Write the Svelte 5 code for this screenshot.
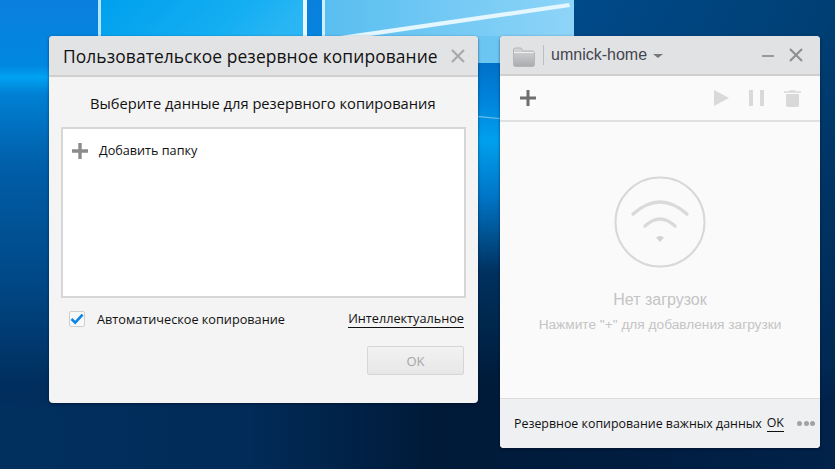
<script>
  const title = 'Пользовательское резервное копирование';
</script>

<div class="desktop">
  <svg class="wall" viewBox="0 0 835 469" width="835" height="469" aria-hidden="true">
    <defs>
      <linearGradient id="base" x1="0" y1="0" x2="0" y2="1">
        <stop offset="0" stop-color="#0a7fdc"/>
        <stop offset="0.14" stop-color="#0088e0"/>
        <stop offset="0.165" stop-color="#00a2f2"/>
        <stop offset="0.2" stop-color="#0080d4"/>
        <stop offset="0.36" stop-color="#015da7"/>
        <stop offset="0.62" stop-color="#004683"/>
        <stop offset="0.84" stop-color="#012c5a"/>
        <stop offset="1" stop-color="#01224a"/>
      </linearGradient>
      <linearGradient id="gap" x1="0" y1="0" x2="0" y2="1">
        <stop offset="0" stop-color="#0a7cd8"/>
        <stop offset="0.13" stop-color="#0070c8"/>
        <stop offset="0.2" stop-color="#0080d8"/>
        <stop offset="0.3" stop-color="#00a0ee"/>
        <stop offset="0.42" stop-color="#0075c6"/>
        <stop offset="0.58" stop-color="#00315f"/>
        <stop offset="0.8" stop-color="#001d3c"/>
        <stop offset="1" stop-color="#001a38"/>
      </linearGradient>
      <linearGradient id="navy" x1="0" y1="0" x2="1" y2="1">
        <stop offset="0" stop-color="#004a8a"/>
        <stop offset="0.5" stop-color="#003f74"/>
        <stop offset="1" stop-color="#012148"/>
      </linearGradient>
      <linearGradient id="paneL" x1="0" y1="0" x2="1" y2="0.2">
        <stop offset="0" stop-color="#00a0ee"/>
        <stop offset="0.7" stop-color="#14aef2"/>
        <stop offset="1" stop-color="#2ab6f4"/>
      </linearGradient>
      <linearGradient id="paneR" x1="0" y1="0" x2="1" y2="0">
        <stop offset="0" stop-color="#58bef0"/>
        <stop offset="1" stop-color="#8ed4f8"/>
      </linearGradient>
      <linearGradient id="bottom" x1="0" y1="0" x2="1" y2="0">
        <stop offset="0" stop-color="#01305f"/>
        <stop offset="0.3" stop-color="#012b58"/>
        <stop offset="0.52" stop-color="#001a38"/>
        <stop offset="0.7" stop-color="#001c3e"/>
        <stop offset="1" stop-color="#01224a"/>
      </linearGradient>
      <linearGradient id="fade" x1="0" y1="0" x2="0" y2="1">
        <stop offset="0" stop-color="#000"/>
        <stop offset="0.4" stop-color="#fff"/>
        <stop offset="1" stop-color="#fff"/>
      </linearGradient>
      <mask id="bottomMask" maskUnits="userSpaceOnUse" x="0" y="370" width="835" height="99">
        <rect x="0" y="370" width="835" height="99" fill="url(#fade)"/>
      </mask>
      <filter id="soft" x="-5%" y="-50%" width="110%" height="200%"><feGaussianBlur stdDeviation="0.7"/></filter>
    </defs>
    <rect width="835" height="469" fill="url(#base)"/>
    <rect x="440" y="0" width="140" height="469" fill="url(#gap)"/>
    <rect x="574" y="0" width="261" height="469" fill="url(#navy)"/>
    <rect x="0" y="370" width="835" height="99" fill="url(#bottom)" mask="url(#bottomMask)"/>
    <rect x="98" y="0" width="209" height="40" fill="url(#paneL)"/>
    <rect x="322" y="0" width="252" height="40" fill="url(#paneR)"/>
    <rect x="470" y="36" width="40" height="27" fill="#6cc6f2"/>
    <polygon points="340,36 569,3 570,7 370,36" fill="#e4f6fe" filter="url(#soft)"/>
    <rect x="98" y="0" width="3" height="40" fill="#b4e6fb"/>
    <rect x="303" y="0" width="4" height="40" fill="#e8f8fe"/>
    <rect x="322" y="0" width="3" height="40" fill="#cdeffd"/>
    <rect x="476" y="117" width="26" height="1.2" fill="#6fc0ea" transform="rotate(5 489 117)"/>
  </svg>

  <section class="win dialog">
    <header class="dlg-head">
      <h1>{title}</h1>
      <svg class="x" width="16" height="16" viewBox="0 0 16 16" aria-hidden="true"><path d="M2 2 14 14M14 2 2 14" stroke="#a7a9ab" stroke-width="2.2" fill="none"/></svg>
    </header>
    <div class="dlg-body">
      <h2>Выберите данные для резервного копирования</h2>
      <div class="list">
        <div class="add">
          <svg width="16" height="16" viewBox="0 0 16 16" aria-hidden="true"><path d="M8 0v16M0 8h16" stroke="#8c8c8c" stroke-width="3.4" fill="none"/></svg>
          <span class="add-label">Добавить папку</span>
        </div>
      </div>
      <div class="opts">
        <label class="auto">
          <span class="check">
            <svg width="14" height="12" viewBox="0 0 14 12" aria-hidden="true"><path d="M1.5 6 5.2 9.6 12.6 1.6" stroke="#0b84e8" stroke-width="2.6" fill="none"/></svg>
          </span>
          <span>Автоматическое копирование</span>
        </label>
        <span class="link">Интеллектуальное</span>
      </div>
      <div class="actions"><button disabled>OK</button></div>
    </div>
  </section>

  <section class="win main">
    <header class="main-head">
      <svg class="folder" width="22" height="20" viewBox="0 0 22 20" aria-hidden="true">
        <defs><linearGradient id="fold" x1="0" y1="0" x2="0" y2="1"><stop offset="0" stop-color="#d6d7d9"/><stop offset="1" stop-color="#a9abae"/></linearGradient></defs>
        <path d="M.5 3Q.5 1 2.500 1H8L10 4H19.500Q21.500 4 21.500 6V17.500Q21.500 19.500 19.500 19.500H2.500Q.5 19.500 .5 17.500Z" fill="url(#fold)" stroke="#b4b5b7"/>
        <path d="M1 5.500H21" stroke="#eeeeef"/>
      </svg>
      <i class="sep"></i>
      <span class="name">umnick-home</span>
      <i class="caret"></i>
      <span class="grow"></span>
      <i class="min"></i>
      <svg class="x2" width="14" height="14" viewBox="0 0 14 14" aria-hidden="true"><path d="M1 1 13 13M13 1 1 13" stroke="#8d8e90" stroke-width="2.1" fill="none"/></svg>
    </header>
    <div class="tools">
      <svg width="18" height="18" viewBox="0 0 18 18" aria-hidden="true"><path d="M9 1v16M1 9h16" stroke="#6e6e6e" stroke-width="3" fill="none"/></svg>
      <span class="grow"></span>
      <svg class="play" width="15" height="16" viewBox="0 0 15 16" aria-hidden="true"><path d="M0 0 15 8 0 16Z" fill="#d9d9d9"/></svg>
      <svg class="pause" width="15" height="16" viewBox="0 0 15 16" aria-hidden="true"><path d="M0 0h4v16H0zM11 0h4v16h-4z" fill="#d9d9d9"/></svg>
      <svg class="trash" width="17" height="17" viewBox="0 0 17 17" aria-hidden="true"><path d="M2 4h13v11Q15 17 13 17H4Q2 17 2 15Z" fill="#d9d9d9"/><path d="M0 2h17M5.500 1h6" stroke="#d9d9d9" stroke-width="1.500"/></svg>
    </div>
    <div class="empty">
      <svg class="wifi" width="92" height="92" viewBox="0 0 92 92" aria-hidden="true">
        <circle cx="46" cy="46" r="44.500" fill="none" stroke="#d8d8d8" stroke-width="2"/>
        <path d="M19 38Q46 14 73 38" fill="none" stroke="#dadada" stroke-width="3.400" stroke-linecap="round"/>
        <path d="M31 50Q46 36 61 50" fill="none" stroke="#dadada" stroke-width="3.400" stroke-linecap="round"/>
        <path d="M42 61.500Q46 58.500 50 61.500L46 66Z" fill="#d2d2d2"/>
      </svg>
      <p class="none">Нет загрузок</p>
      <p class="hint">Нажмите "+" для добавления загрузки</p>
    </div>
    <footer class="foot">
      <span class="msg">Резервное копирование важных данных</span>
      <span class="ok">OK</span>
      <span class="dots"><i></i><i></i><i></i></span>
    </footer>
  </section>
</div>

<style>
  :global(body) { margin: 0; background: #01224a; }
  .desktop {
    position: relative;
    width: 835px;
    height: 469px;
    overflow: hidden;
    font-family: "Open Sans", "Noto Sans", sans-serif;
    color: #111;
  }
  .wall { position: absolute; inset: 0; display: block; }
  .win {
    position: absolute;
    top: 36px;
    display: flex;
    flex-direction: column;
    border-radius: 4px;
    overflow: hidden;
    box-shadow: 0 1px 3px rgba(0, 10, 30, 0.55);
  }
  .dialog { left: 49px; width: 429px; height: 367px; background: #f4f4f4; }
  .main { left: 500px; width: 320px; height: 412px; background: #fafafa; }

  .dlg-head {
    height: 39px;
    flex: none;
    display: flex;
    align-items: center;
    justify-content: space-between;
    padding: 0 12px 0 14px;
    background: #e2e3e5;
    border-bottom: 2px solid #cfcfcf;
  }
  h1 { margin: 0; font-size: 17.400px; font-weight: 400; letter-spacing: 0.1px; white-space: nowrap; }
  .dlg-body { flex: 1; display: flex; flex-direction: column; padding: 0 12px; }
  h2 {
    margin: 0;
    height: 50px;
    line-height: 53px;
    padding-left: 29px;
    font-size: 14.700px;
    font-weight: 400;
    white-space: nowrap;
  }
  .list {
    height: 171px;
    box-sizing: border-box;
    width: 405px;
    background: #fff;
    border: 2px solid #d6d6d6;
  }
  .add { display: flex; align-items: center; gap: 11px; padding: 12px 0 0 9px; font-size: 12.650px; }
  .add svg { flex: none; }
  .add-label { margin-bottom: 2px; }
  .opts {
    display: flex;
    align-items: center;
    justify-content: space-between;
    height: 20px;
    margin-top: 11px;
    padding: 0 2px 0 8px;
    font-size: 12.700px;
  }
  .auto { display: flex; align-items: center; gap: 12px; }
  .check {
    display: flex;
    align-items: center;
    justify-content: center;
    width: 14px;
    height: 14px;
    background: #f8f8f8;
    border: 1px solid #cfcfcf;
    border-radius: 2px;
  }
  .link { border-bottom: 1px solid #111; line-height: 17px; }
  .actions { display: flex; justify-content: flex-end; margin-top: 17px; padding-right: 2px; }
  button {
    width: 97px;
    height: 29px;
    padding: 0;
    font: 400 13px "Open Sans", sans-serif;
    color: #a5a5a5;
    background: linear-gradient(#f2f2f2, #e7e7e7);
    border: 1px solid #d6d6d6;
    border-radius: 2px;
  }

  .main-head {
    height: 38px;
    flex: none;
    display: flex;
    align-items: center;
    padding: 0 17px 0 13px;
    background: #e1e2e4;
    border-bottom: 2px solid #cfcfcf;
  }
  .folder { flex: none; margin-top: 3px; }
  .sep { width: 1px; height: 20px; margin: 0 7px 0 8px; background: #bdbdbd; }
  .name { font: 400 16px "Liberation Sans", Arial, sans-serif; color: #45454f; }
  .caret {
    margin: 2px 0 0 6px;
    border-left: 5px solid transparent;
    border-right: 5px solid transparent;
    border-top: 4px solid #77787a;
  }
  .grow { flex: 1; }
  .min { width: 12px; height: 2px; margin-right: 15px; margin-top: 2px; background: #999a9c; }
  .tools {
    height: 44px;
    flex: none;
    display: flex;
    align-items: center;
    padding: 0 19px;
    border-bottom: 2px solid #e0e0e0;
  }
  .play { margin-right: 20px; }
  .pause { margin-right: 20px; }
  .empty { flex: 1; display: flex; flex-direction: column; align-items: center; padding-top: 54px; }
  p { margin: 0; font-family: "Liberation Sans", Arial, sans-serif; color: #c4c4c4; white-space: nowrap; }
  .none { margin-top: 22px; font-size: 16px; line-height: 20px; }
  .hint { margin-top: 7px; font-size: 13.700px; line-height: 16px; }
  .foot {
    height: 50px;
    flex: none;
    box-sizing: border-box;
    display: flex;
    align-items: center;
    padding: 0 5px 0 14px;
    background: #eff0f2;
    border-top: 1px solid #dcdcdc;
    font-size: 12.400px;
  }
  .ok { margin-left: 5px; border-bottom: 1px solid #111; line-height: 16px; }
  .dots { display: flex; gap: 1.500px; margin-left: auto; }
  .dots i { width: 5px; height: 5px; border-radius: 50%; background: #a2a2a2; }
</style>
